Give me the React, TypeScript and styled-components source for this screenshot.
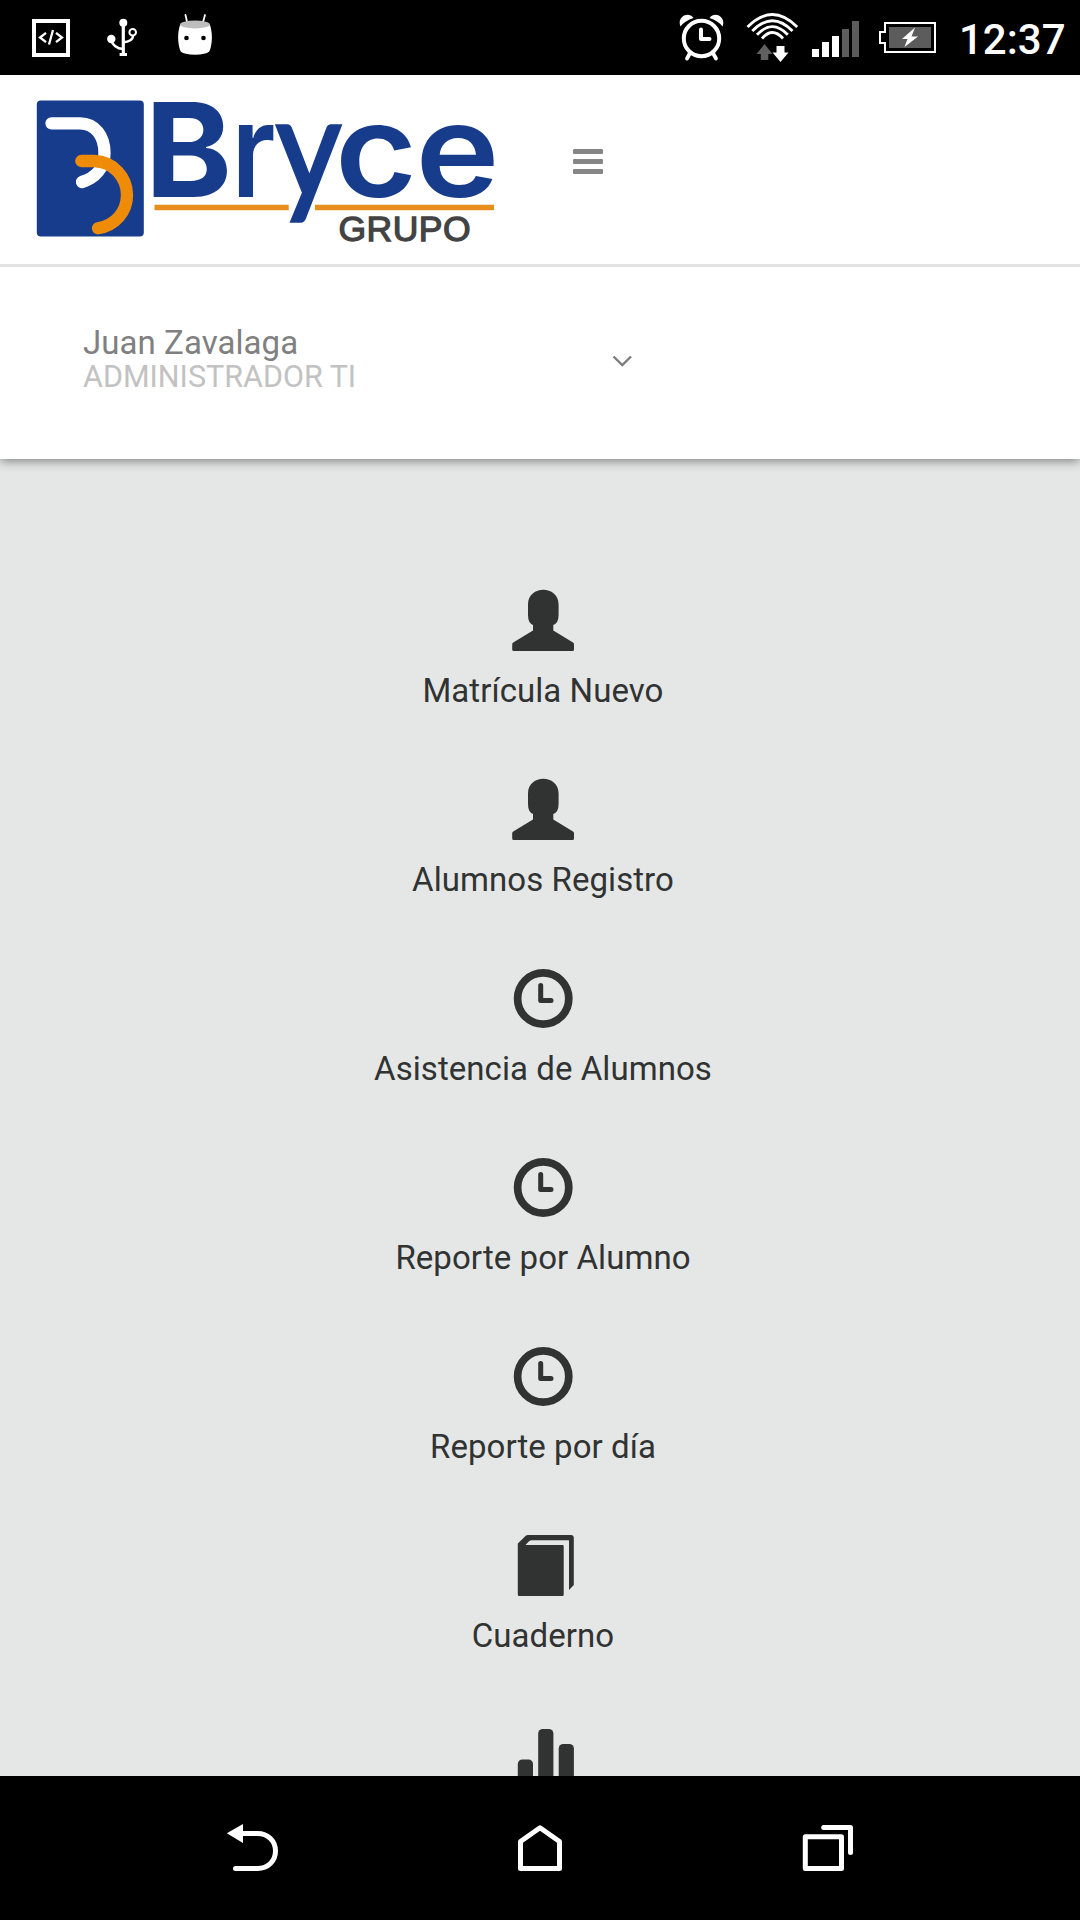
import React from "react";
import styled, { createGlobalStyle } from "styled-components";

const GlobalStyle = createGlobalStyle`
  * { box-sizing: border-box; }
  body { margin: 0; background: #000; font-family: Roboto, "Liberation Sans", sans-serif; }
  svg { display: block; flex: none; }
`;

const Screen = styled.div`
  width: 1080px;
  height: 1920px;
  display: flex;
  flex-direction: column;
  overflow: hidden;
  background: #e5e7e6;
`;

const StatusBar = styled.header`
  height: 75px;
  flex: none;
  display: flex;
  justify-content: space-between;
  padding: 0 16px 0 30px;
  background: #000;
`;

const StatusGroup = styled.div<{ $gap: number }>`
  display: flex;
  align-items: center;
  gap: ${(p) => p.$gap}px;
`;

const Time = styled.time`
  width: 105px;
  padding-top: 4px;
  text-align: right;
  white-space: nowrap;
  font-size: 42px;
  line-height: 50px;
  font-weight: 500;
  color: #fff;
`;

const TopPanel = styled.section`
  flex: none;
  height: 384px;
  position: relative;
  background: #fff;
  box-shadow: 0 2px 10px rgba(0, 0, 0, 0.45);
`;

const BrandRow = styled.div`
  height: 192px;
  display: flex;
  align-items: flex-start;
  padding: 15px 0 0 30px;
  border-bottom: 3px solid #e4e4e4;
`;

const Logo = styled.svg`
  overflow: visible;
`;

const MenuButton = styled.button`
  display: flex;
  flex-direction: column;
  gap: 5px;
  width: 30px;
  margin: 58.5px 0 0 73px;
  padding: 0;
  border: 0;
  background: none;
`;

const MenuLine = styled.span`
  height: 5.2px;
  border-radius: 1px;
  background: #868686;
`;

const UserRow = styled.div`
  display: flex;
  width: 632px;
  justify-content: space-between;
  padding: 56px 0 0 83px;
`;

const UserName = styled.div`
  font-size: 33px;
  line-height: 39px;
  letter-spacing: 0.06px;
  color: #808080;
`;

const UserRole = styled.div`
  font-size: 30.5px;
  line-height: 30px;
  color: #c2c2c2;
`;

const Caret = styled.div`
  padding-top: 32px;
`;

const Menu = styled.nav`
  flex: 1;
  min-height: 0;
  overflow: hidden;
  padding: 130px 0 0 6px;
  display: flex;
  flex-direction: column;
  align-items: center;
`;

const MenuItem = styled.a`
  flex: none;
  height: 189px;
  display: flex;
  flex-direction: column;
  align-items: center;
  gap: 20px;
  color: #303332;
  font-size: 33px;
  line-height: 40px;
  letter-spacing: 0.06px;
`;

const NavBar = styled.footer`
  flex: none;
  height: 144px;
  display: flex;
  justify-content: space-between;
  align-items: center;
  padding: 0 223px;
  background: #000;
`;

const CodeIcon = () => (
  <svg width="42" height="75" viewBox="30 0 42 75" fill="none" stroke="#fff">
    <rect x="34" y="21" width="34" height="34" strokeWidth="4" />
    <path d="M46 32.8L40 37.5L46 42.2M56 32.8L62 37.5L56 42.2M53 30L49 44.5" strokeWidth="2.3" />
  </svg>
);

const UsbIcon = () => (
  <svg width="34" height="75" viewBox="107 0 34 75" fill="none" stroke="#fff">
    <circle cx="123.3" cy="22.7" r="4" fill="#fff" stroke="none" />
    <circle cx="111.3" cy="39" r="4.2" fill="#fff" stroke="none" />
    <circle cx="132.7" cy="32.3" r="3.3" strokeWidth="2" />
    <path d="M123.3 24V54" strokeWidth="3.2" />
    <path d="M111 40C113 46 117 48.5 123 49M133 36C133 39.5 129 42 123.5 42.2" strokeWidth="2.4" />
    <rect x="119.6" y="53" width="7.4" height="3" fill="#fff" stroke="none" />
  </svg>
);

const DroidIcon = () => (
  <svg width="38" height="75" viewBox="176 0 38 75">
    <path d="M185.5 15L187.5 24M205 15L202.5 24" stroke="#fff" strokeWidth="1.8" strokeLinecap="round" />
    <path d="M180 25C177.5 33 177.5 42 180 50Q181 52.5 185 53.5Q195 56 205 53.5Q209 52.5 210 50C212.5 42 212.5 33 210 25Z" fill="#fff" />
    <ellipse cx="195" cy="24.5" rx="15" ry="3.9" fill="#bdbdbd" />
    <circle cx="186.5" cy="38" r="2.3" fill="#000" />
    <circle cx="203.5" cy="38" r="2.3" fill="#000" />
  </svg>
);

const AlarmIcon = () => (
  <svg width="57" height="75" viewBox="678 0 57 75" fill="none" stroke="#fff">
    <circle cx="701.5" cy="38.5" r="17.7" strokeWidth="4" />
    <path d="M701 29.5V39H709.5" strokeWidth="4" strokeLinecap="round" strokeLinejoin="round" />
    <path d="M689.5 54L687 58.5M713.5 54L716 58.5" strokeWidth="3.8" strokeLinecap="round" />
    <path d="M680.5 26.5C676.5 17.5 688 10.5 693.5 18Q685 20.5 680.5 26.5ZM722.5 26.5C726.5 17.5 715 10.5 709.5 18Q718 20.5 722.5 26.5Z" fill="#fff" stroke="none" />
  </svg>
);

const WifiIcon = () => (
  <svg width="70" height="75" viewBox="735 0 70 75" fill="none" stroke="#fff" strokeWidth="2.8">
    <path d="M747.5 27Q772.3 2 797.2 27M752.3 31Q772.3 10.5 792.5 31M757 34.8Q772.3 18.5 787.8 34.8M762 38.5Q772.3 26.5 783 38.5" />
    <path d="M764.5 44L772.5 54H768.3V60H760.8V54H756.5Z" fill="#606060" stroke="none" />
    <path d="M776.5 46H784.5V52.5H788.5L780.5 62L772.5 52.5H776.5Z" fill="#fff" stroke="none" />
  </svg>
);

const bars = [
  { x: 812, y: 49, color: "#fff" },
  { x: 822, y: 42, color: "#fff" },
  { x: 832, y: 36, color: "#fff" },
  { x: 842, y: 29, color: "#5c5c5c" },
  { x: 852, y: 21, color: "#5c5c5c" },
];

const SignalIcon = () => (
  <svg width="65" height="75" viewBox="805 0 65 75">
    {bars.map((b) => (
      <rect key={b.x} x={b.x} y={b.y} width="7" height={57 - b.y} fill={b.color} />
    ))}
  </svg>
);

const BatteryIcon = () => (
  <svg width="89" height="75" viewBox="870 0 89 75">
    <path d="M885 23H935V52H885V43H880V32H885Z" fill="none" stroke="#fff" strokeWidth="2" />
    <rect x="889" y="27" width="42" height="21" fill="#5c5c5c" />
    <path d="M915 27.5L902 39H907.5L904.5 47L918 36.5H911.5Z" fill="#fff" />
  </svg>
);

const BryceLogo = () => (
  <Logo width="470" height="170" viewBox="30 90 470 170">
    <rect x="36.8" y="100.4" width="107" height="136" rx="4" fill="#173c8c" />
    <g fill="none" strokeWidth="12.3" strokeLinecap="round">
      <path d="M51.5 123.3H80C95 123.3 104.5 136 104.5 153C104.5 168 95 178 82 182" stroke="#fff" />
      <path d="M81.3 161H94C114 161.5 127 178 127 195C127 212 115 225.5 98 228.3" stroke="#ee8c09" />
    </g>
    <path d="M154.5 207.5H288.7M315 207.5H494" stroke="#e78e1c" strokeWidth="5.6" />
    <text y="196.7" fill="#173c8c" fontFamily="Inter, sans-serif" fontWeight="600" fontSize="131">
      <tspan x="145" fontWeight="700" textLength="87" lengthAdjust="spacingAndGlyphs">B</tspan>
      <tspan x="231.5" textLength="44" lengthAdjust="spacingAndGlyphs">r</tspan>
      <tspan x="276" fontFamily="Lato, sans-serif" fontWeight="400" fontSize="140" stroke="#173c8c" strokeWidth="3.6" textLength="65" lengthAdjust="spacingAndGlyphs">y</tspan>
      <tspan x="335" textLength="82" lengthAdjust="spacingAndGlyphs">c</tspan>
      <tspan x="415.5" textLength="84" lengthAdjust="spacingAndGlyphs">e</tspan>
    </text>
    <text x="338.5" y="241" fill="#434343" stroke="#434343" strokeWidth="1.3" fontFamily="Liberation Sans, sans-serif" fontSize="35.5" textLength="132">
      GRUPO
    </text>
  </Logo>
);

const ChevronIcon = () => (
  <svg width="20" height="12" viewBox="612 355 20 12">
    <path d="M613.5 356.5L622.3 365L631 356.5" fill="none" stroke="#7c7c7c" strokeWidth="2.4" />
  </svg>
);

const UserGlyph = () => (
  <svg width="62" height="62" viewBox="512 589 62 62" fill="#303332">
    <path d="M528 604.5C528 584.9 558.6 584.9 558.6 604.5V615Q558.6 623 553.3 625V630.5L573 642.5Q574 643 574 644.5V649.5Q574 651 572.5 651H513.7Q512.2 651 512.2 649.5V644.5Q512.2 643 513.2 642.5L533 630.5V625Q528 623 528 615Z" />
  </svg>
);

const ClockGlyph = () => (
  <svg width="62" height="62" viewBox="512 967 62 62" fill="none" stroke="#303332">
    <circle cx="543.2" cy="998.5" r="25.6" strokeWidth="7.7" />
    <path d="M540.7 985.5V1000.5H551" strokeWidth="5" strokeLinecap="round" strokeLinejoin="round" />
  </svg>
);

const BookGlyph = () => (
  <svg width="62" height="62" viewBox="512 1534 62 62" fill="#303332">
    <path d="M517.8 1543.5L525.5 1536Q526.5 1535 528 1535H571Q573.8 1535 573.8 1538V1585L569 1590V1540.2H532Q530 1540.2 529 1541.2L525.5 1545H562.5Q563.7 1545 563.7 1546.2V1594.8Q563.7 1596 562.5 1596H519Q517.8 1596 517.8 1594.8Z" />
  </svg>
);

const StatsGlyph = () => (
  <svg width="62" height="62" viewBox="512 1723 62 62" fill="#303332">
    <rect x="517.8" y="1759.5" width="15.2" height="40" rx="4.5" />
    <rect x="538.2" y="1729" width="15.2" height="70" rx="4.5" />
    <rect x="558.7" y="1744" width="15.2" height="60" rx="4.5" />
  </svg>
);

const BackIcon = () => (
  <svg width="60" height="60" viewBox="223 1818 60 60" fill="none" stroke="#fff">
    <path d="M226.8 1833.3L243 1824V1843Z" fill="#fff" stroke="none" />
    <path d="M240 1833.5H257.5C268 1833.5 275.5 1841 275.5 1851C275.5 1861 268 1868.5 257.5 1868.5H235.5" strokeWidth="5" strokeLinecap="round" />
  </svg>
);

const HomeIcon = () => (
  <svg width="60" height="60" viewBox="510 1818 60 60" fill="none" stroke="#fff">
    <path d="M520.5 1868.5V1841.5L540 1827.8L559.5 1841.5V1868.5Z" strokeWidth="5" strokeLinejoin="round" />
  </svg>
);

const RecentsIcon = () => (
  <svg width="60" height="60" viewBox="797 1818 60 60" fill="none" stroke="#fff" strokeWidth="5" strokeLinejoin="round" strokeLinecap="round">
    <path d="M805.3 1836.7H841.5V1868.5H805.3Z" />
    <path d="M823.7 1827.5H850.5V1852.5" />
  </svg>
);

const items = [
  { label: "Matrícula Nuevo", Icon: UserGlyph },
  { label: "Alumnos Registro", Icon: UserGlyph },
  { label: "Asistencia de Alumnos", Icon: ClockGlyph },
  { label: "Reporte por Alumno", Icon: ClockGlyph },
  { label: "Reporte por día", Icon: ClockGlyph },
  { label: "Cuaderno", Icon: BookGlyph },
  { label: "", Icon: StatsGlyph },
];

export default function App() {
  return (
    <Screen>
      <GlobalStyle />
      <StatusBar>
        <StatusGroup $gap={35}>
          <CodeIcon />
          <UsbIcon />
          <DroidIcon />
        </StatusGroup>
        <StatusGroup $gap={0}>
          <AlarmIcon />
          <WifiIcon />
          <SignalIcon />
          <BatteryIcon />
          <Time>12:37</Time>
        </StatusGroup>
      </StatusBar>
      <TopPanel>
        <BrandRow>
          <BryceLogo />
          <MenuButton aria-label="Menú">
            <MenuLine />
            <MenuLine />
            <MenuLine />
          </MenuButton>
        </BrandRow>
        <UserRow>
          <div>
            <UserName>Juan Zavalaga</UserName>
            <UserRole>ADMINISTRADOR TI</UserRole>
          </div>
          <Caret>
            <ChevronIcon />
          </Caret>
        </UserRow>
      </TopPanel>
      <Menu>
        {items.map(({ label, Icon }, i) => (
          <MenuItem key={i}>
            <Icon />
            {label && <span>{label}</span>}
          </MenuItem>
        ))}
      </Menu>
      <NavBar>
        <BackIcon />
        <HomeIcon />
        <RecentsIcon />
      </NavBar>
    </Screen>
  );
}
